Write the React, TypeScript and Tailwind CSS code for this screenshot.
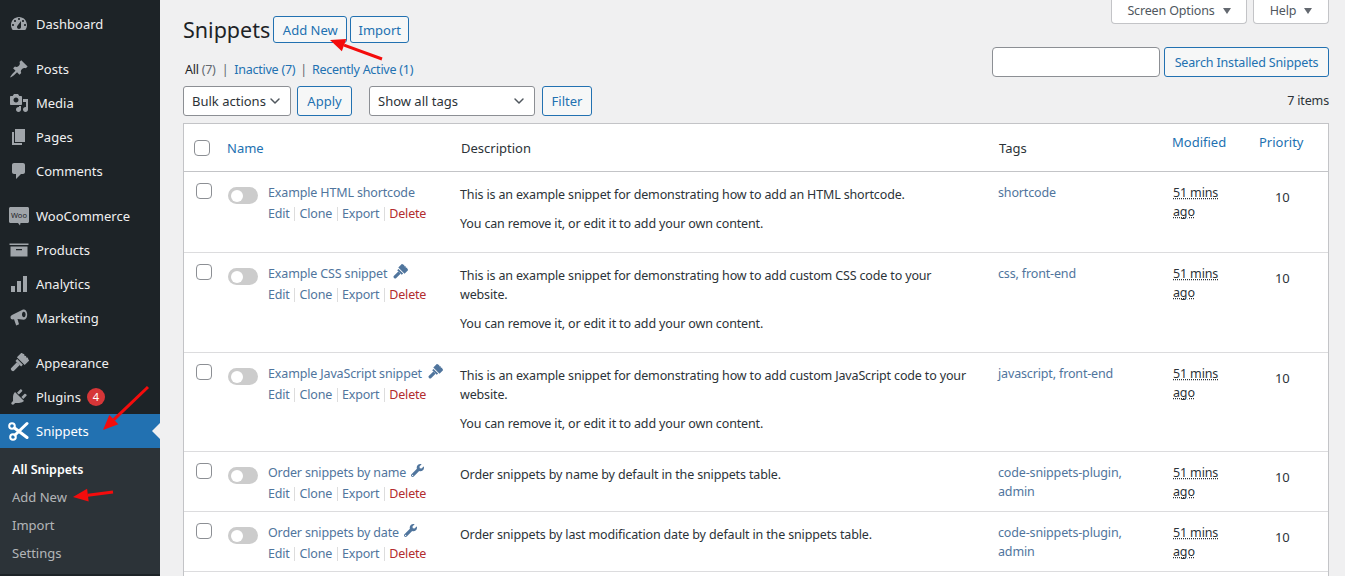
import React from 'react';
import { ChevronDown } from 'lucide-react';
import { FaWrench } from 'react-icons/fa';

const paths: { [key: string]: string } = {
  dashboard: 'M3.76 16h12.48c1.1-1.37 1.76-3.11 1.76-5 0-4.42-3.58-8-8-8s-8 3.58-8 8c0 1.89.66 3.63 1.76 5zM10 4c.55 0 1 .45 1 1s-.45 1-1 1-1-.45-1-1 .45-1 1-1zM6 6c.55 0 1 .45 1 1s-.45 1-1 1-1-.45-1-1 .45-1 1-1zm8 0c.55 0 1 .45 1 1s-.45 1-1 1-1-.45-1-1 .45-1 1-1zm-5.37 5.55L12 7v6c0 1.1-.9 2-2 2s-2-.9-2-2c0-.57.24-1.08.63-1.45zM4 10c.55 0 1 .45 1 1s-.45 1-1 1-1-.45-1-1 .45-1 1-1zm12 0c.55 0 1 .45 1 1s-.45 1-1 1-1-.45-1-1 .45-1 1-1z',
  post: 'M10.44 3.02l1.82-1.82 6.36 6.35-1.83 1.82c-1.05-.68-2.48-.57-3.41.36l-.75.75c-.92.93-1.04 2.35-.35 3.41l-1.83 1.82-2.41-2.41-2.8 2.79c-.42.42-3.38 2.71-3.8 2.29s1.86-3.39 2.28-3.81l2.79-2.79L4.1 9.36l1.83-1.82c1.05.69 2.48.57 3.4-.36l.75-.75c.93-.92 1.05-2.35.36-3.41z',
  media: 'M13 11V4c0-.55-.45-1-1-1h-1.67L9 1H5L3.67 3H2c-.55 0-1 .45-1 1v7c0 .55.45 1 1 1h10c.55 0 1-.45 1-1zM7 4.5c1.38 0 2.5 1.12 2.5 2.5S8.38 9.5 7 9.5 4.5 8.38 4.5 7 5.62 4.5 7 4.5zM14 6h5v10.5c0 1.38-1.12 2.5-2.5 2.5S14 17.88 14 16.5s1.12-2.5 2.5-2.5c.17 0 .34.02.5.05V9h-3V6zm-4 8.05V13h2v3.5c0 1.38-1.12 2.5-2.5 2.5S7 17.88 7 16.5 8.12 14 9.5 14c.17 0 .34.02.5.05z',
  page: 'M6 15V2h10v13H6zm-1 1h8v2H3V5h2v11z',
  comments: 'M5 2h9c1.1 0 2 .9 2 2v7c0 1.1-.9 2-2 2h-2l-5 5v-5H5c-1.1 0-2-.9-2-2V4c0-1.1.9-2 2-2z',
  products: 'M0.500 3.500h19v1.500h-19zM1.500 6.500h17v10h-17zM7 9v1.300h6V9z',
  analytics: 'M2 12h4v6H2v-6zm6-5h4v11H8V7zm6-5h4v16h-4V2z',
  marketing: 'M14 1.500c2.200-.6 4 1.500 4.200 4.500.2 3-1.200 5.500-3.400 5.800L8.500 11l1.500 5.300-2.800 1.200L5 11.200l-1.300.3C2.400 11.500 1.500 10.500 1.500 9.200c0-1 .6-1.900 1.500-2.300L14 1.500zm.6 2.300c-1 .2-1.700 1.500-1.600 3 .1 1.500 1 2.700 2 2.500 1-.2 1.700-1.500 1.600-3-.1-1.500-1-2.700-2-2.500z',
  plugins: 'M13.11 4.36L9.87 7.6 8 5.73l3.24-3.24c.35-.34 1.05-.2 1.56.32.52.51.66 1.21.31 1.55zm-8 1.77l.91-1.12 9.01 9.01-1.19.84c-.71.71-2.63 1.16-3.82 1.16H6.14L4.9 17.26c-.59.59-1.54.59-2.12 0-.59-.58-.59-1.53 0-2.12l1.24-1.24v-3.88c0-1.13.4-3.19 1.09-3.89zm7.26 3.97l3.24-3.24c.34-.35 1.04-.21 1.55.31.52.51.66 1.21.31 1.55l-3.24 3.25z',
};

const MenuIcon = ({ name }: { name: string }) => (
  <svg viewBox="0 0 20 20" className="h-5 w-5 fill-[#a0a5aa]" fillRule="evenodd">
    <path d={paths[name]} />
  </svg>
);

const BrushIcon = ({ className }: { className: string }) => (
  <svg viewBox="0 0 20 20" className={className}>
    <g transform="rotate(45 10 10)">
      <path d="M4.500 0l1.500 1 1.300-1 1.400 1 1.300-1 1.300 1 1.400-1 1.300 1 1.500-1v7.500h-11z" />
      <path d="M6 8.500h8v2.500H6z" />
      <path d="M8 11h4v8c0 1-.9 1.500-2 1.500s-2-.5-2-1.500z" />
    </g>
  </svg>
);

const WooIcon = () => (
  <svg viewBox="0 0 20 20" className="h-5 w-5">
    <path d="M1.500 1h17c.8 0 1.500.7 1.500 1.500v13c0 .8-.7 1.500-1.500 1.500H11.500l-.5 2.500-2-2.500H1.500C.7 17 0 16.300 0 15.500v-13C0 1.700.7 1 1.500 1z" fill="#a0a5aa" />
    <text x="10" y="11.500" textAnchor="middle" fontSize="7.500" fill="#1d2327" fontFamily="'Noto Sans', sans-serif">Woo</text>
  </svg>
);

const ScissorsIcon = () => (
  <svg viewBox="0 0 22 22" className="h-[22px] w-[22px]" fill="none" stroke="#fff">
    <circle cx="5" cy="6" r="2.800" strokeWidth="2" />
    <circle cx="6" cy="17" r="2.800" strokeWidth="2" />
    <path d="M7.500 8L20 17.500M8 15L20 3.500" strokeWidth="3" strokeLinecap="round" />
  </svg>
);

const menuGroups = [
  [{ icon: 'dashboard', label: 'Dashboard' }],
  [
    { icon: 'post', label: 'Posts' },
    { icon: 'media', label: 'Media' },
    { icon: 'page', label: 'Pages' },
    { icon: 'comments', label: 'Comments' },
  ],
  [
    { icon: 'woo', label: 'WooCommerce' },
    { icon: 'products', label: 'Products' },
    { icon: 'analytics', label: 'Analytics' },
    { icon: 'marketing', label: 'Marketing' },
  ],
  [
    { icon: 'appearance', label: 'Appearance' },
    { icon: 'plugins', label: 'Plugins', badge: '4' },
  ],
];

const renderIcon = (icon: string) => {
  if (icon === 'woo') return <WooIcon />;
  if (icon === 'appearance') return <BrushIcon className="h-5 w-5 fill-[#a0a5aa]" />;
  return <MenuIcon name={icon} />;
};

const Sidebar = () => (
  <aside className="flex h-[576px] w-40 shrink-0 flex-col bg-[#1d2327] pt-[7px] text-[#f0f0f1]">
    <div>
      {menuGroups.map((group, i) => (
        <div key={i} className="mb-[11px] last:mb-0">
          {group.map(item => (
            <div key={item.label} className="flex h-[34px] items-center">
              <span className="flex w-9 justify-center pl-[1px]">{renderIcon(item.icon)}</span>
              <span>{item.label}</span>
              {item.badge && (
                <span className="ml-[6px] flex h-[18px] w-[18px] items-center justify-center rounded-full bg-[#d63638] text-[11px] text-white">
                  {item.badge}
                </span>
              )}
            </div>
          ))}
        </div>
      ))}
    </div>
    <div className="relative flex h-[34px] items-center bg-[#2271b1] text-white">
      <span className="flex w-9 justify-center"><ScissorsIcon /></span>
      <span>Snippets</span>
      <span className="absolute right-0 top-[9px] border-y-[8px] border-r-[8px] border-y-transparent border-r-[#f0f0f1]" />
    </div>
    <div className="h-[126px] bg-[#2c3338] pl-3 pt-[7px] text-[#f0f0f1b3]">
      <div className="flex h-7 items-center pt-[1px] text-[12.5px] font-semibold text-white">All Snippets</div>
      <div className="flex h-7 items-center">Add New</div>
      <div className="flex h-7 items-center">Import</div>
      <div className="flex h-7 items-center">Settings</div>
    </div>
  </aside>
);

const Button = ({ children, className = '' }: { children: React.ReactNode; className?: string }) => (
  <button className={`flex items-center justify-center rounded-[3px] border border-[#2271b1] bg-[#f6f7f7] pt-[1px] text-[#2271b1] ${className}`}>
    {children}
  </button>
);

const Select = ({ label, className = '' }: { label: string; className?: string }) => (
  <div className={`flex h-[30px] items-center justify-between rounded-[3px] border border-[#8c8f94] bg-white pl-2 pr-[7px] text-[#2c3338] ${className}`}>
    <span>{label}</span>
    <ChevronDown className="h-4 w-4 text-[#50575e]" strokeWidth={2.2} />
  </div>
);

const Checkbox = () => <span className="block h-4 w-4 rounded-[4px] border border-[#8c8f94] bg-white" />;

const Toggle = () => (
  <span className="flex h-[17px] w-[30px] items-center rounded-full bg-[#cccccc] pl-[3px]">
    <span className="h-3 w-3 rounded-full bg-white" />
  </span>
);

const Sep = () => <span className="mx-[4.5px] h-[14px] w-px bg-[#dddddd]" />;

const RowActions = () => (
  <div className="mt-[1px] flex h-5 items-center tracking-[-0.2px] text-[#50759d]">
    <span>Edit</span>
    <Sep />
    <span>Clone</span>
    <Sep />
    <span>Export</span>
    <Sep />
    <span className="text-[#b32d2e]">Delete</span>
  </div>
);

const YOUR_OWN = 'You can remove it, or edit it to add your own content.';

interface Row {
  name: string;
  icon?: 'brush' | 'wrench';
  desc: string[];
  tags: string;
  height: string;
}

const rows: Row[] = [
  { name: 'Example HTML shortcode', desc: ['This is an example snippet for demonstrating how to add an HTML shortcode.', YOUR_OWN], tags: 'shortcode', height: 'h-[81px]' },
  { name: 'Example CSS snippet', icon: 'brush', desc: ['This is an example snippet for demonstrating how to add custom CSS code to your website.', YOUR_OWN], tags: 'css, front-end', height: 'h-[100px]' },
  { name: 'Example JavaScript snippet', icon: 'brush', desc: ['This is an example snippet for demonstrating how to add custom JavaScript code to your website.', YOUR_OWN], tags: 'javascript, front-end', height: 'h-[99px]' },
  { name: 'Order snippets by name', icon: 'wrench', desc: ['Order snippets by name by default in the snippets table.'], tags: 'code-snippets-plugin, admin', height: 'h-[60px]' },
  { name: 'Order snippets by date', icon: 'wrench', desc: ['Order snippets by last modification date by default in the snippets table.'], tags: 'code-snippets-plugin, admin', height: 'h-[60px]' },
];

const columns = 'grid grid-cols-[43px_226px_537px_174px_87px_1fr]';

const SnippetRow = ({ row }: { row: Row }) => (
  <div className={`${columns} ${row.height} border-b border-[#dcdcde] text-[12.5px] tracking-[-0.15px]`}>
    <div className="pl-3 pt-[11px]"><Checkbox /></div>
    <div className="flex pl-[1px]">
      <div className="pt-[15px]"><Toggle /></div>
      <div className="pl-[10px] pt-[10px]">
        <div className="flex h-[21px] items-center gap-[5px] text-[#50759d]">
          <span>{row.name}</span>
          {row.icon === 'brush' && <BrushIcon className="-mt-1 h-4 w-4 fill-[#50759d]" />}
          {row.icon === 'wrench' && <FaWrench className="-mt-1 h-[13px] w-[13px] text-[#50759d]" />}
        </div>
        <RowActions />
      </div>
    </div>
    <div className="pl-[7px] pr-3 pt-[13px] leading-[19px] text-[#2c3338]">
      {row.desc.map(line => (
        <p key={line} className="mb-[10px]">{line}</p>
      ))}
    </div>
    <div className="pl-2 pr-5 pt-[11px] leading-[19px] text-[#50759d]">{row.tags}</div>
    <div className="pl-[9px] pt-[11px] leading-[19px] text-[#2c3338]">
      <span className="underline decoration-dotted">51 mins</span>
      <br />
      <span className="underline decoration-dotted">ago</span>
    </div>
    <div className="pl-6 pt-4 text-[13px] text-[#2c3338]">10</div>
  </div>
);

const Arrow = ({ x1, y1, x2, y2 }: { x1: number; y1: number; x2: number; y2: number }) => {
  // tip at x2,y2, head drawn in the line's own direction
  const a = Math.atan2(y2 - y1, x2 - x1);
  const back = 15;
  const wide = 6.5;
  const bx = x2 - back * Math.cos(a);
  const by = y2 - back * Math.sin(a);
  const nx = -Math.sin(a) * wide;
  const ny = Math.cos(a) * wide;
  return (
    <>
      <line x1={x1} y1={y1} x2={bx} y2={by} stroke="#f40c0c" strokeWidth={3} />
      <polygon points={`${x2},${y2} ${bx + nx},${by + ny} ${bx - nx},${by - ny}`} fill="#f40c0c" />
    </>
  );
};

const App = () => (
  <div className="relative flex h-[576px] w-[1345px] overflow-hidden bg-[#f0f0f1] font-['Noto_Sans',sans-serif] text-[13px] leading-[1.4]">
    <Sidebar />

    <main className="min-w-0 flex-1 pl-[23px] pr-4">
      {/* Top */}
      <div className="relative h-[123px]">
        <div className="absolute right-0 top-0 flex gap-[6px] text-[12.5px] tracking-[-0.15px] text-[#50575e]">
          <div className="flex h-[24px] w-[136px] items-center justify-center gap-2 rounded-b-[4px] border border-t-0 border-[#c3c4c7] bg-white pb-[2px]">
            Screen Options <span className="border-x-[4px] border-t-[6px] border-x-transparent border-t-[#646970]" />
          </div>
          <div className="flex h-[24px] w-[76px] items-center justify-center gap-2 rounded-b-[4px] border border-t-0 border-[#c3c4c7] bg-white pb-[2px]">
            Help <span className="border-x-[4px] border-t-[6px] border-x-transparent border-t-[#646970]" />
          </div>
        </div>

        <div className="flex items-center pt-[15px]">
          <h1 className="mr-[3px] text-[21.5px] leading-[29px] text-[#1d2327]">Snippets</h1>
          <Button className="h-[27px] w-[74px]">Add New</Button>
          <Button className="ml-[3px] h-[27px] w-[59px]">Import</Button>
        </div>

        <div className="mt-[15px] flex h-[22px] items-center pl-[2px] text-[12.5px] tracking-[-0.25px] text-[#646970]">
          <span className="text-[#1d2327]">All</span>&nbsp;<span>(7)</span>
          <span className="mx-[6px] text-[#646970]">|</span>
          <span className="text-[#2271b1]">Inactive (7)</span>
          <span className="mx-[5px] text-[#646970]">|</span>
          <span className="text-[#2271b1]">Recently Active (1)</span>
        </div>

        <div className="absolute right-0 top-[47px] flex gap-1">
          <div className="h-[30px] w-[168px] rounded-[4px] border border-[#8c8f94] bg-white" />
          <Button className="h-[30px] w-[165px] text-[12.5px] tracking-[-0.15px]">Search Installed Snippets</Button>
        </div>

        <div className="mt-[5px] flex items-center">
          <Select label="Bulk actions" className="w-[108px]" />
          <Button className="ml-[6px] h-[30px] w-[55px]">Apply</Button>
          <Select label="Show all tags" className="ml-[17px] w-[166px]" />
          <Button className="ml-[7px] h-[30px] w-[50px]">Filter</Button>
          <span className="ml-auto text-[12.5px] tracking-[-0.15px] text-[#2c3338]">7 items</span>
        </div>
      </div>

      {/* Table */}
      <div className="border border-b-0 border-[#c3c4c7] bg-white">
        <div className={`${columns} h-[48px] border-b border-[#c3c4c7]`}>
          <div className="flex items-center pl-[10px]"><Checkbox /></div>
          <div className="flex items-center pt-[2px] text-[#2271b1]">Name</div>
          <div className="flex items-center pl-2 pt-[2px] text-[#2c3338]">Description</div>
          <div className="flex items-center pl-[9px] pt-[2px] text-[#2c3338]">Tags</div>
          <div className="pl-2 pt-[9px] text-[#2271b1]">Modified</div>
          <div className="pl-2 pt-[9px] text-[#2271b1]">Priority</div>
        </div>
        {rows.map(row => (
          <SnippetRow key={row.name} row={row} />
        ))}
        <div className="h-10" />
      </div>
    </main>

    {/* Annotation arrows drawn over the screenshot */}
    <svg className="pointer-events-none absolute left-0 top-0" width="1345" height="576">
      <Arrow x1={382} y1={59} x2={330} y2={40} />
      <Arrow x1={148} y1={387} x2={103} y2={430} />
      <Arrow x1={113} y1={492} x2={73} y2={497} />
    </svg>
  </div>
);

export default App;
